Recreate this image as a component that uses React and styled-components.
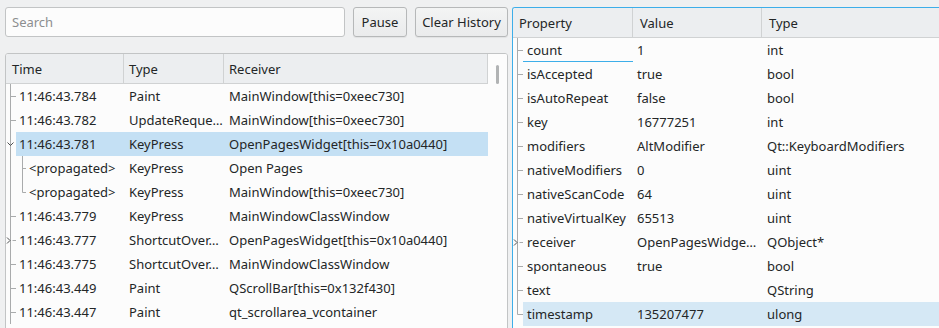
import React from 'react'
import styled, { createGlobalStyle } from 'styled-components'

const GlobalStyle = createGlobalStyle`
  html, body {
    margin: 0;
    padding: 0;
    background: #eff0f1;
  }
  body {
    font-family: "Noto Sans", "DejaVu Sans", sans-serif;
    font-size: 13px;
    color: #232627;
  }
`

const EVENTS = [
  { time: '11:46:43.784', type: 'Paint', receiver: 'MainWindow[this=0xeec730]' },
  { time: '11:46:43.782', type: 'UpdateReque…', receiver: 'MainWindow[this=0xeec730]' },
  { time: '11:46:43.781', type: 'KeyPress', receiver: 'OpenPagesWidget[this=0x10a0440]', selected: true, expanded: true },
  { time: '<propagated>', type: 'KeyPress', receiver: 'Open Pages', depth: 1 },
  { time: '<propagated>', type: 'KeyPress', receiver: 'MainWindow[this=0xeec730]', depth: 1, lastChild: true },
  { time: '11:46:43.779', type: 'KeyPress', receiver: 'MainWindowClassWindow' },
  { time: '11:46:43.777', type: 'ShortcutOver…', receiver: 'OpenPagesWidget[this=0x10a0440]', collapsed: true },
  { time: '11:46:43.775', type: 'ShortcutOver…', receiver: 'MainWindowClassWindow' },
  { time: '11:46:43.449', type: 'Paint', receiver: 'QScrollBar[this=0x132f430]' },
  { time: '11:46:43.447', type: 'Paint', receiver: 'qt_scrollarea_vcontainer' },
]

const PROPS = [
  { name: 'count', value: '1', type: 'int', current: true },
  { name: 'isAccepted', value: 'true', type: 'bool' },
  { name: 'isAutoRepeat', value: 'false', type: 'bool' },
  { name: 'key', value: '16777251', type: 'int' },
  { name: 'modifiers', value: 'AltModifier', type: 'Qt::KeyboardModifiers' },
  { name: 'nativeModifiers', value: '0', type: 'uint' },
  { name: 'nativeScanCode', value: '64', type: 'uint' },
  { name: 'nativeVirtualKey', value: '65513', type: 'uint' },
  { name: 'receiver', value: 'OpenPagesWidge…', type: 'QObject*', collapsed: true },
  { name: 'spontaneous', value: 'true', type: 'bool' },
  { name: 'text', value: '', type: 'QString' },
  { name: 'timestamp', value: '135207477', type: 'ulong', selected: true, last: true },
]

const LINE = '#a9abac'

// branch lines drawn per row, like QTreeView's indentation area
function Branch({ depth = 0, lastChild, expanded, collapsed, last }) {
  const w = 10 + depth * 10
  const base = 4.5
  const child = 16.5
  return (
    <BranchBox style={{ width: w }}>
      <svg width={w} height="24" viewBox={`0 0 ${w} 24`}>
        <line x1={base} y1="0" x2={base} y2={last ? 12.5 : 24} stroke={LINE} />
        {depth === 0 && !expanded && !collapsed && (
          <line x1={base} y1="12.5" x2={base + 6} y2="12.5" stroke={LINE} />
        )}
        {depth === 1 && (
          <>
            <line x1={child} y1="0" x2={child} y2={lastChild ? 12.5 : 24} stroke={LINE} />
            <line x1={child} y1="12.5" x2={child + 4} y2="12.5" stroke={LINE} />
          </>
        )}
        {expanded && (
          <polyline points="1.5,10.5 4.5,13.5 7.5,10.5" fill="none" stroke="#4d4f50" strokeWidth="1" />
        )}
        {collapsed && (
          <>
            <line x1={base + 2} y1="12.5" x2={base + 6} y2="12.5" stroke={LINE} />
            <polyline points="1,9.5 4,12.5 1,15.5" fill="none" stroke="#4d4f50" strokeWidth="1" />
          </>
        )}
      </svg>
    </BranchBox>
  )
}

export default function App() {
  return (
    <>
      <GlobalStyle />
      <Window>
        <LeftPane>
          <Toolbar>
            <SearchInput placeholder="Search" />
            <ToolButton $w={54}>Pause</ToolButton>
            <ToolButton $w={93}>Clear History</ToolButton>
          </Toolbar>
          <TreeFrame>
            <TreeMain>
              <EventHeader>
                <HeadCell $pad={6}>Time</HeadCell>
                <HeadCell $pad={5}>Type</HeadCell>
                <HeadCell $pad={5}>Receiver</HeadCell>
              </EventHeader>
              {EVENTS.map((e, i) => (
                <Row key={i}>
                  <Branch depth={e.depth} lastChild={e.lastChild} expanded={e.expanded} collapsed={e.collapsed} />
                  <Highlight $on={e.selected}>
                    <Cell $pad={3} $w={e.depth ? 98 : 108}>{e.time}</Cell>
                    <Cell $pad={5} $w={100}>{e.type}</Cell>
                    <Cell $pad={5}>{e.receiver}</Cell>
                  </Highlight>
                </Row>
              ))}
            </TreeMain>
            <ScrollTrack>
              <ScrollHandle />
            </ScrollTrack>
          </TreeFrame>
        </LeftPane>

        <PropPane>
          <PropHeader>
            <HeadCell $pad={6}>Property</HeadCell>
            <HeadCell $pad={7}>Value</HeadCell>
            <HeadCell $pad={7} $last>Type</HeadCell>
          </PropHeader>
          {PROPS.map((p) => (
            <Row key={p.name}>
              <Branch collapsed={p.collapsed} last={p.last} />
              <Highlight $on={p.selected} $soft>
                <Cell $pad={4} $w={110} $current={p.current}>{p.name}</Cell>
                <Cell $pad={4} $w={129}>{p.value}</Cell>
                <Cell $pad={5}>{p.type}</Cell>
              </Highlight>
            </Row>
          ))}
        </PropPane>
      </Window>
    </>
  )
}

const Window = styled.div`
  display: flex;
  align-items: flex-start;
  gap: 4px;
  height: 328px;
  overflow: hidden;
  padding: 7px 0 0 5px;
  box-sizing: border-box;
`

const LeftPane = styled.div`
  display: flex;
  flex-direction: column;
  gap: 16px;
  width: 503px;
  flex-shrink: 0;
`

const Toolbar = styled.div`
  display: flex;
  align-items: center;
  gap: 8px;
  height: 30px;
`

const SearchInput = styled.input`
  box-sizing: border-box;
  flex: none;
  width: 340px;
  height: 30px;
  padding: 0 6px;
  border: 1px solid #c2c4c5;
  border-radius: 3px;
  background: #fcfcfc;
  font: inherit;
  color: #232627;
  outline: none;
  &::placeholder {
    color: #8c8e90;
  }
`

const ToolButton = styled.button`
  box-sizing: border-box;
  flex: none;
  width: ${(p) => p.$w}px;
  height: 30px;
  padding: 0;
  text-align: center;
  white-space: nowrap;
  border: 1px solid #b6b8b9;
  border-radius: 3px;
  background: linear-gradient(#f3f4f4, #eaebec);
  box-shadow: 0 1px 1px rgba(0, 0, 0, 0.06);
  font: inherit;
  color: #232627;
`

const TreeFrame = styled.div`
  display: flex;
  height: 290px;
  border: 1px solid #c2c4c5;
  border-radius: 3px 3px 0 0;
  background: #fcfcfc;
  overflow: hidden;
`

const TreeMain = styled.div`
  flex: 1;
  min-width: 0;
  display: flex;
  flex-direction: column;
`

const ScrollTrack = styled.div`
  width: 19px;
  display: flex;
  justify-content: center;
  padding-top: 11px;
  background: #fcfcfc;
`

const ScrollHandle = styled.div`
  width: 3px;
  height: 19px;
  border-radius: 2px;
  background: #b1b3b4;
`

const HeaderBar = styled.div`
  display: grid;
  height: 29px;
  background: #eceef0;
  border-bottom: 1px solid #d0d2d3;
  flex-shrink: 0;
`

const EventHeader = styled(HeaderBar)`
  grid-template-columns: 118px 100px 1fr;
`

const PropHeader = styled(HeaderBar)`
  grid-template-columns: 120px 129px 1fr;
`

const HeadCell = styled.div`
  display: flex;
  align-items: center;
  padding-left: ${(p) => p.$pad}px;
  border-right: ${(p) => (p.$last ? 'none' : '1px solid #d0d2d3')};
  white-space: nowrap;
`

const Row = styled.div`
  display: flex;
  height: 24px;
  flex-shrink: 0;
`

const BranchBox = styled.div`
  flex-shrink: 0;
  height: 24px;
  svg {
    display: block;
  }
`

const Highlight = styled.div`
  display: flex;
  align-items: center;
  flex: 1;
  min-width: 0;
  background: ${(p) => (p.$on ? (p.$soft ? '#d5e8f5' : '#c4e0f4') : 'transparent')};
`

const Cell = styled.div`
  box-sizing: border-box;
  height: 24px;
  line-height: 24px;
  padding-left: ${(p) => p.$pad}px;
  width: ${(p) => (p.$w ? `${p.$w}px` : 'auto')};
  flex: ${(p) => (p.$w ? 'none' : 1)};
  white-space: nowrap;
  overflow: hidden;
  border-bottom: ${(p) => (p.$current ? '1px solid #3daee9' : 'none')};
`

const PropPane = styled.div`
  display: flex;
  flex-direction: column;
  flex: 1;
  min-width: 428px;
  height: 330px;
  border: 1px solid #3daee9;
  border-right: none;
  border-radius: 3px 0 0 0;
  background: #fcfcfc;
  overflow: hidden;
`
